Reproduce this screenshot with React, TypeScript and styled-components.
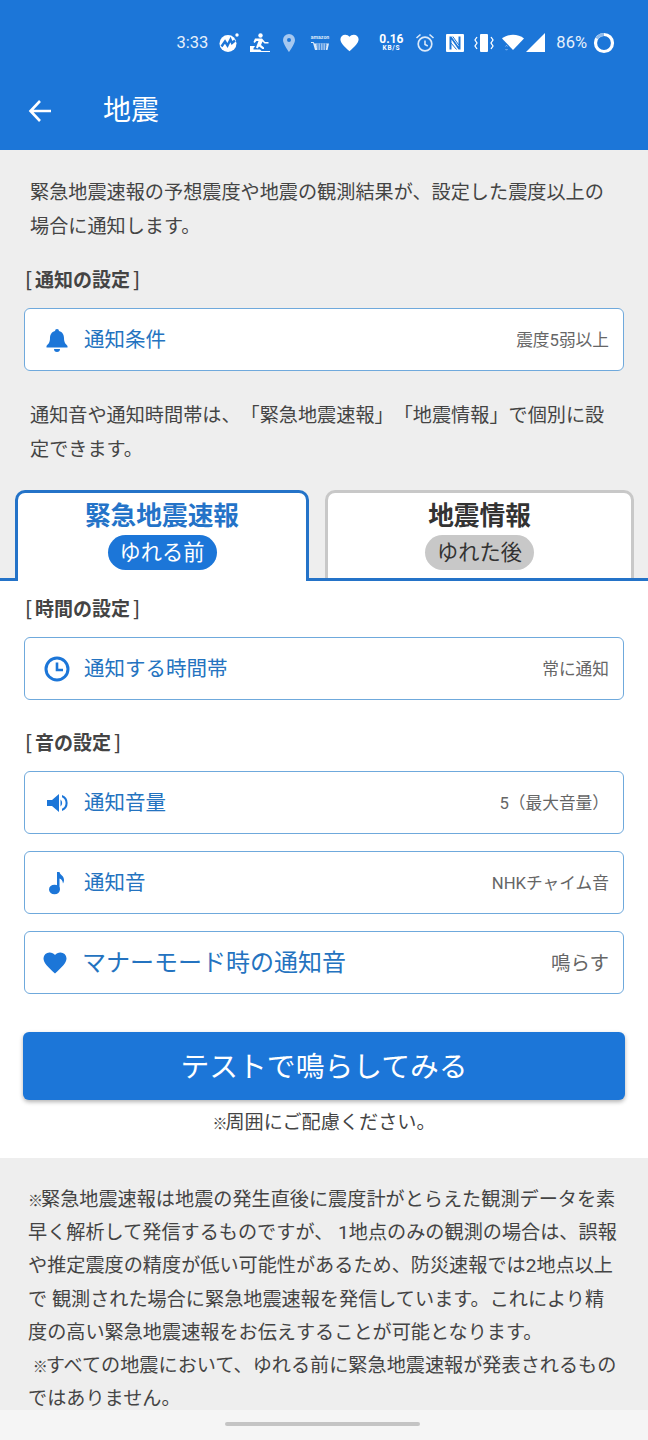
import React from "react";
import styled, { createGlobalStyle } from "styled-components";

const Global = createGlobalStyle`
  html, body { margin: 0; padding: 0; background: #fff; }
  body { font-family: Roboto, "Noto Sans CJK JP", sans-serif; color: #444; text-spacing-trim: space-all; }
  * { box-sizing: border-box; }
`;

const Page = styled.div`
  width: 648px;
  height: 1440px;
  overflow: hidden;
  display: flex;
  flex-direction: column;
  position: relative;
`;
const StatusBar = styled.div`
  height: 76px;
  background: #1c76d8;
  color: #e6f0fb;
  display: flex;
  align-items: center;
  justify-content: flex-end;
  padding: 9px 33px 0 0;
  font-size: 16.5px;
`;
const StatusItem = styled.span<{ $ml?: number }>`
  margin-left: ${(p) => p.$ml ?? 0}px;
  display: inline-flex;
  align-items: center;
`;
const Speed = styled.span`
  width: 24px;
  display: inline-flex;
  flex-direction: column;
  align-items: center;
  color: #fff;
  font-weight: 700;
  font-size: 12px;
  line-height: 11px;
  margin-left: 20px;
  small { font-size: 6.5px; line-height: 7px; letter-spacing: 0.7px; }
`;
const AppBar = styled.div`
  height: 74px;
  background: #1c76d8;
  color: #fff;
  display: flex;
  align-items: center;
  padding: 0 0 4px 28px;
`;
const Title = styled.h1`
  font-size: 28px;
  font-weight: 400;
  margin: 0 0 0 51px;
  line-height: 34px;
`;
const GraySection = styled.section`
  background: #eeeeee;
  height: 431px;
  padding-top: 26px;
  position: relative;
  border-bottom: 3px solid #2473c8;
`;
const Para = styled.p<{ $mt?: number }>`
  margin: ${(p) => p.$mt ?? 0}px 0 0;
  padding: 0 0 0 30px;
  font-size: 19.15px;
  line-height: 34px;
  color: #444;
  white-space: nowrap;
`;
const Heading = styled.h2<{ $mt: number }>`
  margin: ${(p) => p.$mt}px 0 0 25px;
  font-size: 19px;
  line-height: 28px;
  font-weight: 700;
  color: #444;
`;
const Bracket = styled.span<{ $end?: boolean }>`
  display: inline-block;
  width: 10px;
  font-family: "Noto Sans CJK JP", sans-serif;
  font-weight: 500;
  font-size: 20px;
  line-height: 20px;
  text-align: ${(p) => (p.$end ? "right" : "left")};
`;
const Row = styled.div<{ $mt: number; $large?: boolean }>`
  margin: ${(p) => p.$mt}px 24px 0;
  height: 63px;
  background: #fff;
  border: 1.5px solid #6fa9dc;
  border-radius: 6px;
  display: flex;
  align-items: center;
  padding: ${(p) => (p.$large ? "0 14px 0 16px" : "0 14px 0 18px")};
  color: #2473c0;
  font-size: ${(p) => (p.$large ? 24 : 20.5)}px;
`;
const IconSlot = styled.span`
  width: 28px;
  height: 28px;
  display: inline-flex;
  align-items: center;
  justify-content: center;
  margin-right: 13px;
  flex: none;
`;
const RowLabel = styled.span`
  flex: 1;
  white-space: nowrap;
  padding-bottom: 4px;
`;
const RowValue = styled.span<{ $large?: boolean }>`
  font-size: ${(p) => (p.$large ? 19.5 : 16.7)}px;
  color: #666;
  white-space: nowrap;
  padding-bottom: 2px;
`;
const Tabs = styled.div`
  position: absolute;
  left: 15px;
  right: 14px;
  bottom: 0;
  display: flex;
  gap: 16px;
`;
const Tab = styled.div<{ $active?: boolean }>`
  flex: ${(p) => (p.$active ? "0 0 294px" : "1")};
  height: ${(p) => (p.$active ? 91 : 88)}px;
  margin-bottom: ${(p) => (p.$active ? -3 : 0)}px;
  align-self: flex-end;
  background: #fff;
  border: 3px solid ${(p) => (p.$active ? "#2473c8" : "#c8c8c8")};
  border-bottom: none;
  border-radius: 10px 10px 0 0;
  display: flex;
  flex-direction: column;
  align-items: center;
  padding-top: 5px;
  position: relative;
  z-index: 1;
`;
const TabTitle = styled.div<{ $active?: boolean }>`
  font-size: 25.7px;
  line-height: 36px;
  font-weight: 700;
  color: ${(p) => (p.$active ? "#2473c8" : "#333")};
`;
const Pill = styled.div<{ $active?: boolean }>`
  margin-top: 1px;
  width: 109px;
  height: 35px;
  border-radius: 18px;
  background: ${(p) => (p.$active ? "#1c76d8" : "#c8c8c8")};
  color: ${(p) => (p.$active ? "#fff" : "#333")};
  font-size: 21.2px;
  line-height: 35px;
  text-align: center;
`;
const WhiteSection = styled.section`
  background: #fff;
  height: 577px;
  padding-top: 15px;
`;
const TestButton = styled.div`
  margin: 38px 23px 0;
  height: 68px;
  padding-top: 1px;
  background: #1c76d8;
  border-radius: 6px;
  box-shadow: 0 2px 4px rgba(0, 0, 0, 0.3);
  color: #fff;
  font-size: 28.8px;
  line-height: 68px;
  text-align: center;
`;
const Note = styled.div`
  margin-top: 9px;
  font-size: 19.15px;
  line-height: 28px;
  text-align: center;
  color: #444;
`;
const Mark = styled.span`
  display: inline-block;
  width: 13px;
  font-size: 15px;
  line-height: 15px;
  text-align: center;
`;
const Footer = styled.section`
  background: #eeeeee;
  flex: 1;
  padding: 25px 0 0 28px;
  font-size: 19.15px;
  line-height: 33.2px;
  color: #444;
  white-space: nowrap;
`;
const NavBar = styled.div`
  position: absolute;
  left: 0;
  right: 0;
  bottom: 0;
  height: 30px;
  background: #f5f5f5;
  display: flex;
  justify-content: center;
  padding: 12px 3px 0 0;
`;
const NavHandle = styled.div`
  width: 195px;
  height: 4px;
  border-radius: 2px;
  background: #c4c4c4;
`;

const Ic = ({ w, h = w, ml = 0, children, vb }: { w: number; h?: number; ml?: number; vb?: string; children: React.ReactNode }) => (
  <StatusItem $ml={ml}>
    <svg width={w} height={h} viewBox={vb ?? `0 0 ${w} ${h}`} fill="#fff">{children}</svg>
  </StatusItem>
);

const blue = "#1c76d8";
const heart = "M12 21.5C5 15 .5 11 .5 6.3A6 6 0 0 1 6.7.5c2.1 0 4.1 1 5.3 2.600C13.2 1.5 15.2.5 17.300.5a6 6 0 0 1 6.200 5.800c0 4.700-4.500 8.700-11.500 15.200z";

const App = () => (
  <Page>
    <Global />
    <StatusBar>
      <StatusItem>3:33</StatusItem>
      <Ic w={20} ml={11}>
        <circle cx="9" cy="10.500" r="8.500" />
        <path d="M2.500 13.500l3.500-5 2.500 4 3-6 1.500 3.500 3-2.500" fill="none" stroke="#1c76d8" strokeWidth="2.400" />
        <circle cx="18" cy="2" r="1.700" />
      </Ic>
      <Ic w={20} ml={11}>
        <circle cx="10.500" cy="2.500" r="2.200" />
        <path d="M5 5.500h7l3 3.500h3.500v1.500H14.500L12.500 8.500 11 12l3 2.500v1.500h-1.500L9 13.500 7.500 15.500 6 14.500 8.500 8h-2l-2 2L3.500 9z" />
        <path d="M0 13h5l-1 1.700h-.500V16.500h6.500L11.500 18H20v1H0z" />
      </Ic>
      <Ic w={14} h={20} ml={12}>
        <path fillRule="evenodd" fill="#a6c8f0" d="M7 1a6 6 0 0 1 6 6c0 4-6 12-6 12S1 11 1 7a6 6 0 0 1 6-6zm0 4a2 2 0 1 0 0 4 2 2 0 0 0 0-4z" />
      </Ic>
      <Ic w={20} ml={14}>
        <text x="10" y="6" textAnchor="middle" fontSize="5.200" fontWeight="700" fontFamily="Roboto, sans-serif" fill="#dbe9f9">amazon</text>
        <path d="M1 9h2.500l1 1.500H19L17.500 17H5L3 10H1z" opacity=".85" />
        <path d="M6 12h11M6.500 14h10M7 16h9M8 10.500v6.500M10.500 10.500v6.500M13 10.500v6.500M15.500 10.500v6.500" stroke="#1c76d8" strokeWidth=".7" fill="none" />
      </Ic>
      <Ic w={19} h={18} ml={10} vb="0 0 24 22">
        <path d={heart} />
      </Ic>
      <Speed>0.16<small>KB/S</small></Speed>
      <Ic w={20} ml={12}>
        <circle cx="10" cy="11" r="6.800" fill="none" stroke="#dbe9f9" strokeWidth="1.700" />
        <path d="M10 7.500v4l2.800 1.500M1.500 5l4-3.500M18.500 5l-4-3.500" fill="none" stroke="#dbe9f9" strokeWidth="1.600" />
      </Ic>
      <Ic w={18} ml={11}>
        <path fillRule="evenodd" d="M1 0h16a1 1 0 0 1 1 1v16a1 1 0 0 1-1 1H1a1 1 0 0 1-1-1V1a1 1 0 0 1 1-1zm2.500 2.500V15.500H5.500V5.500l7 10h2V2.500h-2v10l-7-10z" />
        <path d="M6.800 2.500l6 8.500M5 9l5.500 6.500" stroke="#1c76d8" strokeWidth="1" fill="none" />
      </Ic>
      <Ic w={20} ml={10}>
        <rect x="6" y="1" width="8" height="18" rx="1" />
        <path d="M3 4L1 7l2 3-2 3 2 3M17 4l2 3-2 3 2 3-2 3" fill="none" stroke="#fff" strokeWidth="1.300" />
      </Ic>
      <Ic w={22} h={18} ml={8}>
        <path d="M0 4.500C6-.5 16-.5 22 4.500L11 16z" />
        <path d="M3.500 12.500l1-1.200 1 1.200M3.500 15l1 1.200 1-1.200" fill="none" stroke="#a6c8f0" strokeWidth=".8" />
      </Ic>
      <Ic w={19} ml={2}>
        <path d="M19 0v19H0z" />
      </Ic>
      <StatusItem $ml={11}>86%</StatusItem>
      <Ic w={22} ml={6}>
        <circle cx="11" cy="11" r="8.500" fill="none" stroke="#fff" strokeWidth="3.200" />
        <path d="M11 2.500A8.500 8.500 0 0 0 3.800 6.500" fill="none" stroke="#8fbbec" strokeWidth="3.200" />
      </Ic>
    </StatusBar>
    <AppBar>
      <svg width="24" height="24" viewBox="0 0 24 24" fill="none" stroke="#fff" strokeWidth="2.600">
        <path d="M23 12H2.500M12 2L2.500 12 12 22" />
      </svg>
      <Title>地震</Title>
    </AppBar>
    <GraySection>
      <Para>緊急地震速報の予想震度や地震の観測結果が、設定した震度以上の<br />場合に通知します。</Para>
      <Heading $mt={23}><Bracket>[</Bracket>通知の設定<Bracket $end>]</Bracket></Heading>
      <Row $mt={13}>
        <IconSlot>
          <svg width="22" height="24" viewBox="0 0 22 24" fill={blue}>
            <path d="M11 1a2 2 0 0 1 2 2c3.500 1 5 4 5 7 0 5 2 6 3.500 8v1.500H.5V18C2 16 4 15 4 10c0-3 1.500-6 5-7a2 2 0 0 1 2-2zM8 21h6a3 3 0 0 1-6 0z" />
          </svg>
        </IconSlot>
        <RowLabel>通知条件</RowLabel>
        <RowValue>震度5弱以上</RowValue>
      </Row>
      <Para $mt={28}>通知音や通知時間帯は、「緊急地震速報」「地震情報」で個別に設<br />定できます。</Para>
      <Tabs>
        <Tab $active>
          <TabTitle $active>緊急地震速報</TabTitle>
          <Pill $active>ゆれる前</Pill>
        </Tab>
        <Tab>
          <TabTitle>地震情報</TabTitle>
          <Pill>ゆれた後</Pill>
        </Tab>
      </Tabs>
    </GraySection>
    <WhiteSection>
      <Heading $mt={0}><Bracket>[</Bracket>時間の設定<Bracket $end>]</Bracket></Heading>
      <Row $mt={13}>
        <IconSlot>
          <svg width="26" height="26" viewBox="0 0 26 26" fill="none" stroke={blue} strokeWidth="3">
            <circle cx="13" cy="13" r="11" />
            <path d="M13 6.500V14h6" strokeWidth="2.600" />
          </svg>
        </IconSlot>
        <RowLabel>通知する時間帯</RowLabel>
        <RowValue>常に通知</RowValue>
      </Row>
      <Heading $mt={30}><Bracket>[</Bracket>音の設定<Bracket $end>]</Bracket></Heading>
      <Row $mt={13}>
        <IconSlot>
          <svg width="22" height="22" viewBox="0 0 22 22" fill={blue}>
            <path d="M1 8h5l7-6v18l-7-6H1z" />
            <path d="M14.500 7.500a4.500 4.500 0 0 1 0 7zM16 3a8.500 8.500 0 0 1 0 16v-2.200a6.500 6.500 0 0 0 0-11.600z" />
          </svg>
        </IconSlot>
        <RowLabel>通知音量</RowLabel>
        <RowValue>5（最大音量）</RowValue>
      </Row>
      <Row $mt={17}>
        <IconSlot>
          <svg width="18" height="24" viewBox="0 0 18 24" fill={blue}>
            <ellipse cx="6.500" cy="18.500" rx="5.500" ry="4.800" />
            <path d="M9 1h2.500c.5 3 4.500 3.500 4.500 8 0 1.500-.5 2.500-1 3.500-.2-3-2-4.500-3.500-5V18H9z" />
          </svg>
        </IconSlot>
        <RowLabel>通知音</RowLabel>
        <RowValue>NHKチャイム音</RowValue>
      </Row>
      <Row $mt={17} $large>
        <IconSlot>
          <svg width="24" height="22" viewBox="0 0 24 22" fill={blue}>
            <path d={heart} />
          </svg>
        </IconSlot>
        <RowLabel>マナーモード時の通知音</RowLabel>
        <RowValue $large>鳴らす</RowValue>
      </Row>
      <TestButton>テストで鳴らしてみる</TestButton>
      <Note><Mark>※</Mark>周囲にご配慮ください。</Note>
    </WhiteSection>
    <Footer>
      <Mark>※</Mark>緊急地震速報は地震の発生直後に震度計がとらえた観測データを素<br />
      早く解析して発信するものですが、 1地点のみの観測の場合は、誤報<br />
      や推定震度の精度が低い可能性があるため、防災速報では2地点以上<br />
      で 観測された場合に緊急地震速報を発信しています。これにより精<br />
      度の高い緊急地震速報をお伝えすることが可能となります。<br />
      &nbsp;<Mark>※</Mark>すべての地震において、ゆれる前に緊急地震速報が発表されるもの<br />
      ではありません。
    </Footer>
    <NavBar><NavHandle /></NavBar>
  </Page>
);

export default App;
